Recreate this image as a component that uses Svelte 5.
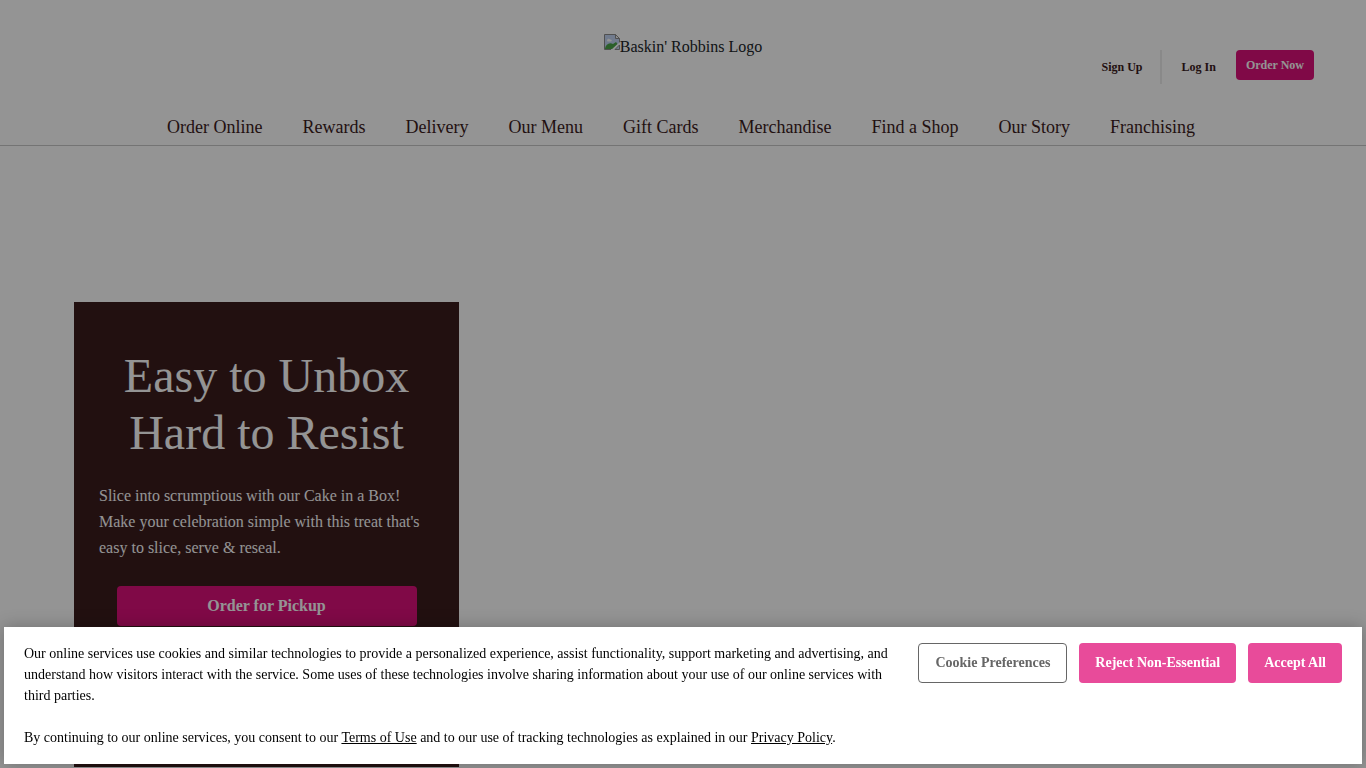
<script lang="ts">
  const navItems = [
    'Order Online',
    'Rewards',
    'Delivery',
    'Our Menu',
    'Gift Cards',
    'Merchandise',
    'Find a Shop',
    'Our Story',
    'Franchising'
  ];

  let showConsent = $state(true);

  function closeConsent() {
    showConsent = false;
  }
</script>

<div class="page">
  <header class="site-header">
    <div class="top-row">
      <a class="logo" href="#home">
        <svg class="logo-icon" width="16" height="16" viewBox="0 0 16 16" aria-hidden="true">
          <path d="M.5.5h11l4 4v6l-5 5H.5z" fill="#c3d5f3" />
          <path d="M1 14.500c1-4 4-6.500 8-4.500l3-2 1.500 2-5 5H1z" fill="#4ba447" />
          <path d="M3 6.500c0-2 2.500-2.500 3-1 1.500-.5 2.500 1.500 1 2H3.500z" fill="#fff" />
          <path d="M15.500 10V4.500l-4-4H.5v15H7" fill="none" stroke="#8b8b8b" />
          <path d="M11.500.5v4h4z" fill="#f4f4f4" stroke="#8b8b8b" />
          <path d="M7 16l9-8v2l-6 6z" fill="#fff" />
          <path d="M11 15.500h4.500V11z" fill="#c3d5f3" stroke="#8b8b8b" />
        </svg>
        <span>Baskin' Robbins Logo</span>
      </a>
      <div class="account">
        <a class="account-link sign-up" href="#signup">Sign Up</a>
        <a class="account-link log-in" href="#login">Log In</a>
        <a class="order-now" href="#order">Order Now</a>
      </div>
    </div>
    <nav class="main-nav" aria-label="Main">
      {#each navItems as item (item)}
        <a href="#{item.toLowerCase().replaceAll(' ', '-')}">{item}</a>
      {/each}
    </nav>
  </header>

  <main class="hero">
    <section class="hero-card">
      <h1>Easy to Unbox Hard to Resist</h1>
      <p>
        Slice into scrumptious with our Cake in a Box! Make your celebration simple with this treat
        that's easy to slice, serve &amp; reseal.
      </p>
      <a class="hero-button" href="#pickup">Order for Pickup</a>
    </section>
  </main>
</div>

{#if showConsent}
  <div class="overlay"></div>
  <div class="consent" role="dialog" aria-label="Cookie consent">
    <div class="consent-text">
      <p>
        Our online services use cookies and similar technologies to provide a personalized
        experience, assist functionality, support marketing and advertising, and understand how
        visitors interact with the service. Some uses of these technologies involve sharing
        information about your use of our online services with third parties.
      </p>
      <p>
        By continuing to our online services, you consent to our <a href="#terms">Terms of Use</a>
        and to our use of tracking technologies as explained in our
        <a href="#privacy">Privacy Policy</a>.
      </p>
    </div>
    <div class="consent-actions">
      <button class="consent-button outline">Cookie Preferences</button>
      <button class="consent-button" onclick={closeConsent}>Reject Non-Essential</button>
      <button class="consent-button" onclick={closeConsent}>Accept All</button>
    </div>
  </div>
{/if}

<style>
  :global(body) {
    margin: 0;
    background: #fff;
    font-family: 'Liberation Serif', 'Times New Roman', serif;
    overflow: hidden;
  }

  a {
    color: inherit;
    text-decoration: none;
  }

  .page {
    color: #3c1c1d;
  }

  /* Header */
  .site-header {
    border-bottom: 1px solid #c8c8c8;
  }

  .top-row {
    display: grid;
    grid-template-columns: 1fr auto 1fr;
    align-items: start;
    height: 114px;
    padding: 0 52px;
    box-sizing: border-box;
  }

  .logo {
    grid-column: 2;
    display: flex;
    margin-top: 34px;
    font-size: 16px;
    line-height: 26px;
    color: #212529;
  }

  .logo-icon {
    flex-shrink: 0;
  }

  .account {
    justify-self: end;
    display: flex;
    align-items: flex-start;
    margin-top: 50px;
    font-size: 12px;
    font-weight: 700;
  }

  .account-link {
    line-height: 34px;
  }

  .sign-up {
    padding-right: 17px;
    border-right: 2px solid #ececec;
  }

  .log-in {
    padding: 0 20px;
  }

  .order-now {
    padding: 0 10px;
    border-radius: 4px;
    background: #dd107a;
    color: #fff;
    line-height: 30px;
  }

  .main-nav {
    display: flex;
    justify-content: center;
    gap: 40px;
    padding: 0 4px 5px 0;
    font-size: 18px;
    line-height: 26px;
  }

  /* Hero */
  .hero {
    padding: 156px 74px 0;
  }

  .hero-card {
    box-sizing: border-box;
    width: 385px;
    min-height: 465px;
    padding: 45px 25px 40px;
    background: #3c1c1d;
    color: #fff;
  }

  h1 {
    margin: 0 0 22px;
    font-size: 48px;
    font-weight: 400;
    line-height: 57px;
    text-align: center;
  }

  .hero-card p {
    margin: 0 0 25px;
    font-size: 16px;
    line-height: 26px;
  }

  .hero-button {
    display: block;
    max-width: 300px;
    margin: 0 auto;
    border-radius: 4px;
    background: #dd107a;
    font-size: 16px;
    font-weight: 700;
    line-height: 40px;
    text-align: center;
  }

  /* Cookie consent */
  .overlay {
    position: fixed;
    inset: 0;
    background: rgba(0, 0, 0, 0.42);
  }

  .consent {
    position: fixed;
    right: 4px;
    bottom: 4px;
    left: 4px;
    display: flex;
    align-items: flex-start;
    gap: 24px;
    padding: 16px 20px;
    background: #fff;
    color: #000;
    font-size: 14px;
    line-height: 21px;
    box-shadow: 0 0 16px rgba(0, 0, 0, 0.25);
  }

  .consent-text {
    flex: 1;
  }

  .consent-text p {
    margin: 0;
  }

  .consent-text p + p {
    margin-top: 21px;
  }

  .consent-text a {
    text-decoration: underline;
  }

  .consent-actions {
    display: flex;
    gap: 12px;
  }

  .consent-button {
    height: 40px;
    padding: 0 16px;
    border: 0;
    border-radius: 4px;
    background: #e84b9a;
    color: #fff;
    font-family: inherit;
    font-size: 14px;
    font-weight: 700;
    white-space: nowrap;
    cursor: pointer;
  }

  .consent-button.outline {
    border: 1px solid #666;
    background: #fff;
    color: #666;
  }
</style>
